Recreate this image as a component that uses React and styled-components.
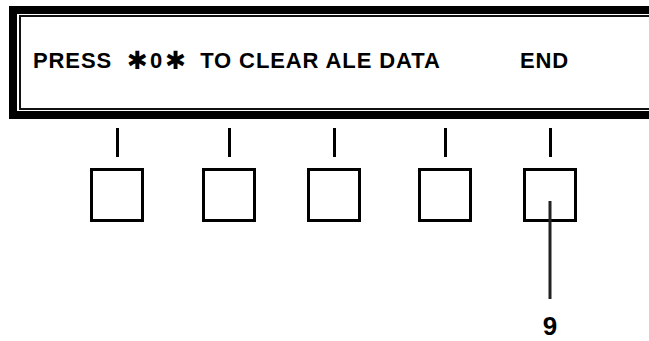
import React from 'react';
import styled, { createGlobalStyle } from 'styled-components';

const Global = createGlobalStyle`
  html, body { margin: 0; padding: 0; background: #fff; overflow: hidden; }
  body { font-family: "Liberation Sans", Arial, sans-serif; color: #000; }
`;

const Page = styled.div`
  width: 649px;
  height: 341px;
  overflow: hidden;
  box-sizing: border-box;
  padding: 6px 0 0 9px;
`;

const Bezel = styled.div`
  width: 700px;
  border: 8px solid #000;
  border-right: none;
  padding: 1px 0 1px 2px;
`;

const Screen = styled.div`
  height: 95px;
  box-sizing: border-box;
  border: 2px solid #111;
  border-right: none;
  padding: 33px 0 0 12px;
  display: grid;
  grid-template-columns: 487px auto;
  align-items: start;
  font-weight: 700;
  font-size: 22px;
  line-height: 22px;
  letter-spacing: 0.9px;
  white-space: pre;
`;

const Message = styled.div`
  display: flex;
  align-items: center;
`;

const Code = styled.span`
  display: inline-flex;
  align-items: center;
  gap: 2px;
  margin: 0 14px 0 15px;
`;

const Star = styled.span`
  font-family: "DejaVu Sans", sans-serif;
  font-size: 25px;
  letter-spacing: 0;
  line-height: 22px;
`;

const SoftKeys = styled.div`
  display: flex;
  align-items: flex-start;
  margin-top: 9px;
  padding-left: 81px;
`;

const Key = styled.div`
  position: relative;
  width: 54px;
  display: flex;
  flex-direction: column;
  align-items: center;
  margin-left: ${p => p.$gap || 0}px;
`;

const Tick = styled.div`
  width: 3px;
  height: 29px;
  background: #000;
`;

const Button = styled.div`
  margin-top: 11px;
  width: 54px;
  height: 54px;
  box-sizing: border-box;
  border: 3px solid #000;
`;

const Leader = styled.div`
  position: absolute;
  top: 73px;
  left: 50%;
  transform: translateX(-50%);
  width: 3px;
  height: 98px;
  background: #222;
`;

const Label = styled.div`
  position: absolute;
  top: 186px;
  left: 50%;
  transform: translateX(-50%);
  font-weight: 700;
  font-size: 26px;
  line-height: 24px;
`;

const keys = [0, 58, 51, 57, 51];

export default function App() {
  return (
    <>
      <Global />
      <Page>
        <Bezel>
          <Screen>
            <Message>
              <span>PRESS</span>
              <Code>
                <Star>✱</Star>
                <span>0</span>
                <Star>✱</Star>
              </Code>
              <span>TO CLEAR ALE DATA</span>
            </Message>
            <span>END</span>
          </Screen>
        </Bezel>
        <SoftKeys>
          {keys.map((g, i) => (
            <Key key={i} $gap={g}>
              <Tick />
              <Button />
              {i === 4 && (
                <>
                  <Leader />
                  <Label>9</Label>
                </>
              )}
            </Key>
          ))}
        </SoftKeys>
      </Page>
    </>
  );
}
